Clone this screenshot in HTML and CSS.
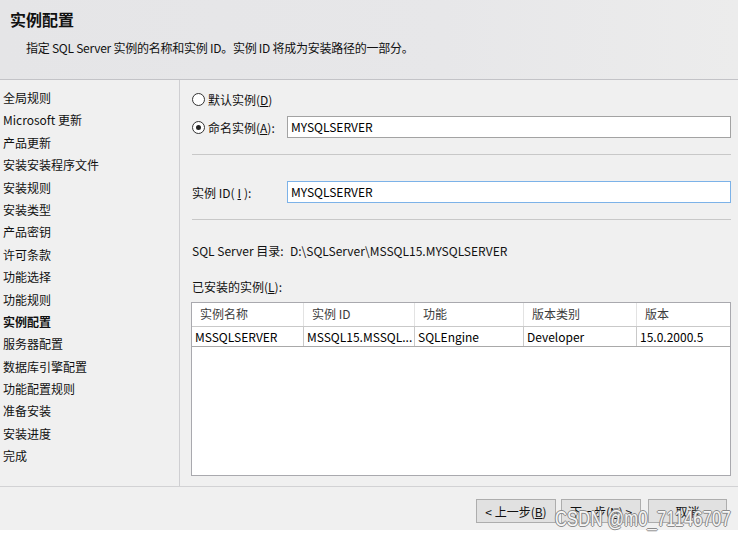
FILE: index.html
```html
<!DOCTYPE html>
<html lang="zh-CN">
<head>
<meta charset="utf-8">
<title>实例配置</title>
<link rel="stylesheet" href="styles.css">
</head>
<body>
<div class="window">
  <header class="header">
    <h1 class="title">实例配置</h1>
    <p class="subtitle">指定 SQL Server 实例的名称和实例 ID。实例 ID 将成为安装路径的一部分。</p>
  </header>
  <div class="main">
    <nav class="nav">
      <div class="nav-item">全局规则</div>
      <div class="nav-item">Microsoft 更新</div>
      <div class="nav-item">产品更新</div>
      <div class="nav-item">安装安装程序文件</div>
      <div class="nav-item">安装规则</div>
      <div class="nav-item">安装类型</div>
      <div class="nav-item">产品密钥</div>
      <div class="nav-item">许可条款</div>
      <div class="nav-item">功能选择</div>
      <div class="nav-item">功能规则</div>
      <div class="nav-item active">实例配置</div>
      <div class="nav-item">服务器配置</div>
      <div class="nav-item">数据库引擎配置</div>
      <div class="nav-item">功能配置规则</div>
      <div class="nav-item">准备安装</div>
      <div class="nav-item">安装进度</div>
      <div class="nav-item">完成</div>
    </nav>
    <section class="content">
      <div class="radio-row">
        <span class="radio"></span><span>默认实例(<u>D</u>)</span>
      </div>
      <div class="field-row named">
        <div class="label radio-label"><span class="radio checked"></span><span>命名实例(<u>A</u>):</span></div>
        <div class="input">MYSQLSERVER</div>
      </div>
      <div class="sep sep-1"></div>
      <div class="field-row id-row">
        <div class="label">实例 ID(<u>I</u>):</div>
        <div class="input focused">MYSQLSERVER</div>
      </div>
      <div class="sep sep-2"></div>
      <div class="info-row dir-row">
        <span class="info-label">SQL Server 目录:</span>
        <span class="info-value">D:\SQLServer\MSSQL15.MYSQLSERVER</span>
      </div>
      <div class="info-row installed-row">已安装的实例(<u>L</u>):</div>
      <div class="table">
        <div class="trow thead">
          <div class="cell">实例名称</div>
          <div class="cell">实例 ID</div>
          <div class="cell">功能</div>
          <div class="cell">版本类别</div>
          <div class="cell">版本</div>
        </div>
        <div class="trow tbody">
          <div class="cell">MSSQLSERVER</div>
          <div class="cell">MSSQL15.MSSQL...</div>
          <div class="cell">SQLEngine</div>
          <div class="cell">Developer</div>
          <div class="cell">15.0.2000.5</div>
        </div>
      </div>
    </section>
  </div>
  <footer class="footer">
    <button class="btn">&lt; 上一步(<u>B</u>)</button>
    <button class="btn next">下一步(<u>N</u>) &gt;</button>
    <button class="btn cancel">取消</button>
  </footer>
</div>
<div class="watermark">CSDN @m0_71146707</div>
</body>
</html>
```
FILE: styles.css
```css
html, body {
  margin: 0;
  padding: 0;
  background: #ffffff;
}
body {
  font-family: "Noto Sans CJK SC", "Noto Sans", sans-serif;
  font-size: 12px;
  color: #111;
  position: relative;
  width: 745px;
  height: 537px;
  overflow: hidden;
}
u {
  text-decoration: underline;
  text-underline-offset: 1px;
}
.window {
  width: 738px;
  height: 530px;
  background: #f0f0f0;
  display: flex;
  flex-direction: column;
}
.header {
  height: 80px;
  box-sizing: border-box;
  border-bottom: 1px solid #c3c3c7;
  background: linear-gradient(to right, #e5e5e7 0%, #e7e7e9 60%, #ececec 100%);
  padding: 8px 0 0 10px;
}
.title {
  margin: 0;
  font-size: 16px;
  line-height: 22px;
  font-weight: bold;
  color: #111;
}
.subtitle {
  margin: 9px 0 0 16px;
  font-size: 12px;
  line-height: 18px;
  letter-spacing: -0.25px;
  color: #111;
}
.main {
  height: 406px;
  display: flex;
  border-bottom: 1px solid #d2d2d4;
}
.nav {
  width: 180px;
  box-sizing: border-box;
  border-right: 1px solid #cfcfd2;
  padding: 7px 0 0 3px;
}
.nav-item {
  height: 22.4px;
  line-height: 22.4px;
  white-space: nowrap;
}
.nav-item.active {
  font-weight: bold;
}
.content {
  flex: 1;
  padding: 9px 7px 0 12px;
  display: flex;
  flex-direction: column;
}
.radio-row {
  height: 20px;
  display: flex;
  align-items: center;
  gap: 3px;
}
.radio {
  width: 11px;
  height: 11px;
  border: 1px solid #333;
  border-radius: 50%;
  background: #fff;
  box-sizing: content-box;
  display: inline-flex;
  align-items: center;
  justify-content: center;
  flex: none;
}
.radio.checked::after {
  content: "";
  width: 5px;
  height: 5px;
  border-radius: 50%;
  background: #222;
}
.field-row {
  display: flex;
  align-items: center;
  height: 22px;
}
.named {
  margin-top: 7px;
}
.id-row {
  margin-top: 26px;
}
.label {
  width: 95px;
  flex: none;
  display: flex;
  align-items: center;
  gap: 3px;
}
.input {
  flex: 1;
  height: 22px;
  box-sizing: border-box;
  border: 1px solid #a3a3a3;
  background: #fff;
  padding-left: 3px;
  line-height: 20px;
  color: #000;
}
.input.focused {
  border-color: #7cb2e8;
}
.sep {
  height: 1px;
  background: #c8c8c8;
}
.sep-1 {
  margin-top: 16px;
}
.sep-2 {
  margin-top: 16px;
}
.info-row {
  height: 20px;
  line-height: 20px;
  white-space: nowrap;
}
.dir-row {
  margin-top: 21px;
  display: flex;
}
.info-label {
  width: 98px;
  flex: none;
}
.installed-row {
  margin-top: 16px;
}
.table {
  margin-top: 5px;
  width: 540px;
  margin-left: -1px;
  height: 174px;
  box-sizing: border-box;
  border: 1px solid #a9a9ae;
  background: #fff;
}
.trow {
  display: grid;
  grid-template-columns: 112px 111px 109px 113px 1fr;
}
.thead {
  height: 23px;
}
.thead .cell {
  color: #3c3c3c;
  padding-left: 8px;
  line-height: 22px;
  border-right: 1px solid #e3e3e3;
}
.thead .cell:last-child {
  border-right: none;
}
.tbody {
  height: 21px;
  box-sizing: border-box;
  border-top: 1px solid #c9c9c9;
  border-bottom: 1px solid #a9a9a9;
}
.tbody .cell {
  padding-left: 3px;
  line-height: 19px;
  border-right: 1px solid #c9c9c9;
  white-space: nowrap;
  overflow: hidden;
  color: #000;
}
.tbody .cell:last-child {
  border-right: none;
}
.footer {
  flex: 1;
  display: flex;
  justify-content: flex-end;
  align-items: flex-start;
  padding: 12px 11px 0 0;
}
.btn {
  font-family: "Noto Sans CJK SC", "Noto Sans", sans-serif;
  font-size: 12px;
  color: #111;
  width: 80px;
  height: 24px;
  background: #e1e1e1;
  border: 1px solid #adadad;
  border-radius: 0;
  padding: 0;
  margin: 0;
}
.next {
  margin-left: 5px;
}
.cancel {
  margin-left: 7px;
  width: 79px;
}
.watermark {
  position: absolute;
  left: 555px;
  top: 505px;
  font-family: "Liberation Sans", Arial, sans-serif;
  font-size: 16.5px;
  line-height: 20px;
  color: #f6f6f6;
  letter-spacing: 0.2px;
  transform: scaleY(1.3);
  transform-origin: left top;
  text-shadow: 1px 0 0 #8a8a8a, -1px 0 0 #8a8a8a, 0 1px 0 #8a8a8a, 0 -1px 0 #8a8a8a;
  white-space: nowrap;
}
```
